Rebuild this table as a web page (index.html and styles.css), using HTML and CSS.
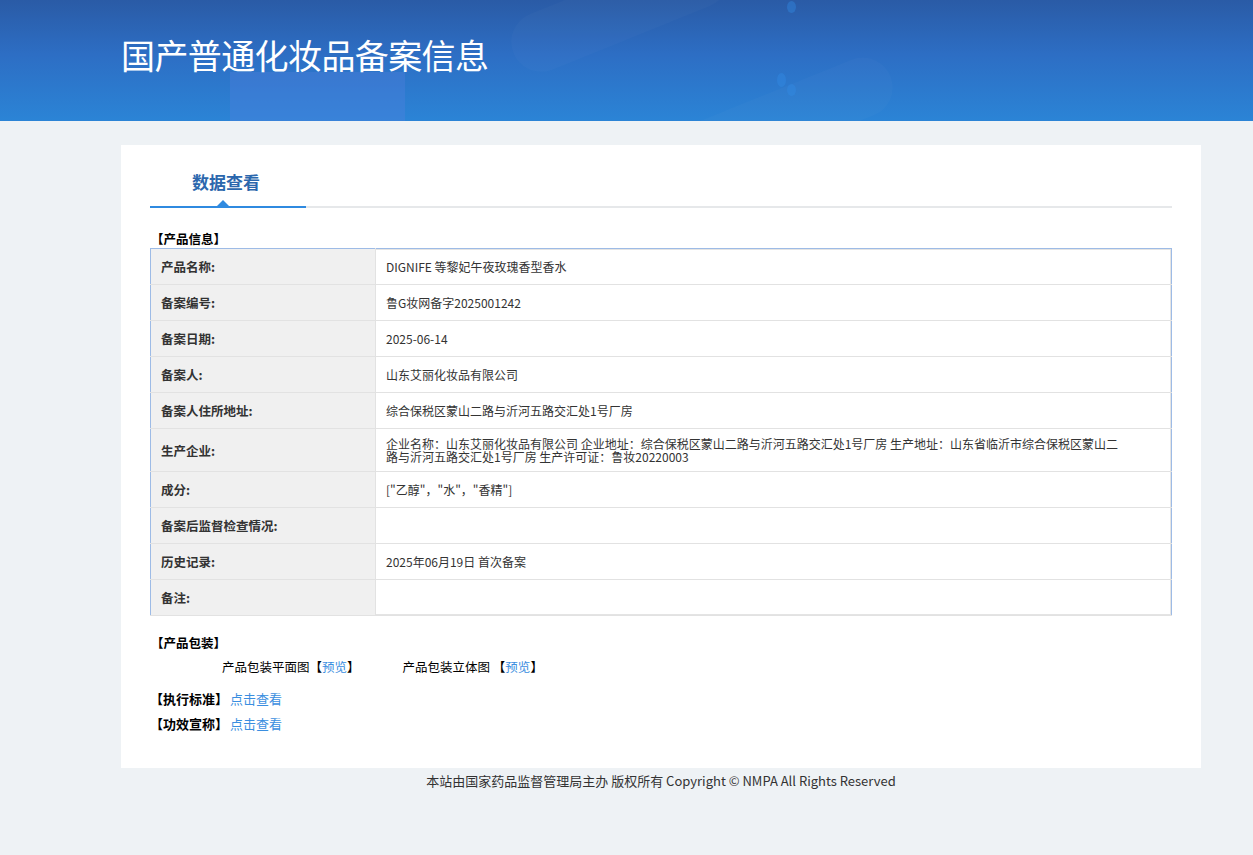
FILE: index.html
```html
<!DOCTYPE html>
<html lang="zh">
<head>
<meta charset="utf-8">
<title>国产普通化妆品备案信息</title>
<link rel="stylesheet" href="styles.css">
</head>
<body>
<header class="banner">
  <div class="banner-deco deco1"></div>
  <div class="banner-deco deco2"></div>
  <div class="banner-deco deco3"></div>
  <div class="banner-dot dot1"></div>
  <div class="banner-dot dot2"></div>
  <div class="banner-dot dot3"></div>
  <h1 class="banner-title">国产普通化妆品备案信息</h1>
</header>
<main class="card">
  <div class="tabs">
    <div class="tab active">数据查看</div>
  </div>
  <div class="section-title">【产品信息】</div>
  <table class="info">
    <tr><th>产品名称:</th><td>DIGNIFE 等黎妃午夜玫瑰香型香水</td></tr>
    <tr><th>备案编号:</th><td>鲁G妆网备字2025001242</td></tr>
    <tr><th>备案日期:</th><td>2025-06-14</td></tr>
    <tr><th>备案人:</th><td>山东艾丽化妆品有限公司</td></tr>
    <tr><th>备案人住所地址:</th><td>综合保税区蒙山二路与沂河五路交汇处1号厂房</td></tr>
    <tr class="tall"><th>生产企业:</th><td>企业名称：山东艾丽化妆品有限公司 企业地址：综合保税区蒙山二路与沂河五路交汇处1号厂房 生产地址：山东省临沂市综合保税区蒙山二路与沂河五路交汇处1号厂房 生产许可证：鲁妆20220003</td></tr>
    <tr><th>成分:</th><td>["乙醇"，"水"，"香精"]</td></tr>
    <tr><th>备案后监督检查情况:</th><td></td></tr>
    <tr><th>历史记录:</th><td>2025年06月19日 首次备案</td></tr>
    <tr><th>备注:</th><td></td></tr>
  </table>
  <div class="section-title pack">【产品包装】</div>
  <div class="pack-row">
    <span class="pack-item">产品包装平面图【<a href="#">预览</a>】</span>
    <span class="pack-item">产品包装立体图 【<a href="#">预览</a>】</span>
  </div>
  <div class="link-row first"><b>【执行标准】</b><a href="#">点击查看</a></div>
  <div class="link-row"><b>【功效宣称】</b><a href="#">点击查看</a></div>
</main>
<footer class="footer">本站由国家药品监督管理局主办 版权所有 Copyright © NMPA All Rights Reserved</footer>
</body>
</html>
```
FILE: styles.css
```css
* { box-sizing: border-box; }
html, body { margin: 0; padding: 0; }
body {
  background: #eef2f5;
  font-family: "Noto Sans CJK SC", "Noto Sans", sans-serif;
  font-size: 12px;
  color: #333;
  min-height: 855px;
}
.banner {
  position: relative;
  height: 121px;
  overflow: hidden;
  background: linear-gradient(180deg, #2a5ba6 0%, #2d6ec4 45%, #2b84d6 100%);
  display: flex;
  align-items: center;
  padding-left: 121px;
}
.banner-deco {
  position: absolute;
  border-radius: 40px;
  background: rgba(255,255,255,0.02);
}
.deco1 { left: 505px; top: -20px; width: 230px; height: 60px; transform: rotate(-22deg); border-radius: 30px; }
.deco2 { left: 230px; top: 72px; width: 175px; height: 60px; background: rgba(90,130,225,0.3); border-radius: 0; }
.deco3 { left: 640px; top: 95px; width: 260px; height: 60px; transform: rotate(-22deg); border-radius: 30px; }
.banner-dot {
  position: absolute;
  width: 9px;
  height: 12px;
  border-radius: 50%;
  background: rgba(50,140,230,0.4);
}
.dot1 { left: 787px; top: 1px; }
.dot2 { left: 777px; top: 73px; height: 14px; }
.dot3 { left: 787px; top: 84px; }
.banner-title {
  position: relative;
  margin: 0 0 13px 0;
  color: #fff;
  font-size: 34px;
  font-weight: 400;
  letter-spacing: -0.6px;
}
.card {
  width: 1080px;
  margin: 24px 0 0 121px;
  background: #fff;
  padding: 20px 29px 35px 29px;
}
.tabs {
  border-bottom: 2px solid #e6e8ea;
  height: 43px;
  display: flex;
}
.tab {
  position: relative;
  width: 156px;
  text-align: center;
  font-size: 17px;
  font-weight: 700;
  color: #2b67ad;
  line-height: 34px;
  border-bottom: 2px solid #2f8ae0;
  margin-bottom: -2px;
  padding-right: 4px;
}
.tab::after {
  content: "";
  position: absolute;
  left: 67px;
  bottom: 0;
  border-left: 6px solid transparent;
  border-right: 6px solid transparent;
  border-bottom: 6px solid #2f8ae0;
}
.section-title {
  margin-top: 22px;
  font-weight: 700;
  color: #000;
  font-size: 12.5px;
  line-height: 18px;
  margin-left: 1px;
}
.info {
  width: 100%;
  border-collapse: collapse;
  border: 1px solid #9dbbe6;
  box-shadow: inset 0 0 0 1px #e4e4e4;
}
.info th, .info td {
  border-bottom: 1px solid #e2e2e2;
  height: 36px;
  padding: 0 10px;
  font-size: 12px;
  line-height: 13px;
  text-align: left;
  vertical-align: middle;
}
.info th {
  width: 225px;
  background: #f0f0f0;
  border-right: 1px solid #e2e2e2;
  font-weight: 700;
  color: #333;
  font-size: 12.5px;
}
.info td { color: #333; padding-right: 50px; }
.info tr.tall th, .info tr.tall td { height: 43px; }
.section-title.pack { margin-top: 18px; }
.pack-row {
  display: flex;
  padding-left: 72px;
  margin-top: 6px;
  line-height: 18px;
  color: #000;
  font-size: 12.5px;
}
.pack-item { margin-right: 43px; }
a { color: #3a8ee0; text-decoration: none; }
.link-row {
  margin-top: 7px;
  line-height: 18px;
  color: #000;
  font-size: 13px;
}
.link-row.first { margin-top: 14px; }
.link-row b { margin-right: 2px; }
.footer {
  width: 1080px;
  margin-left: 121px;
  text-align: center;
  font-size: 13px;
  color: #333;
  padding-top: 4px;
  line-height: 18px;
}
```
